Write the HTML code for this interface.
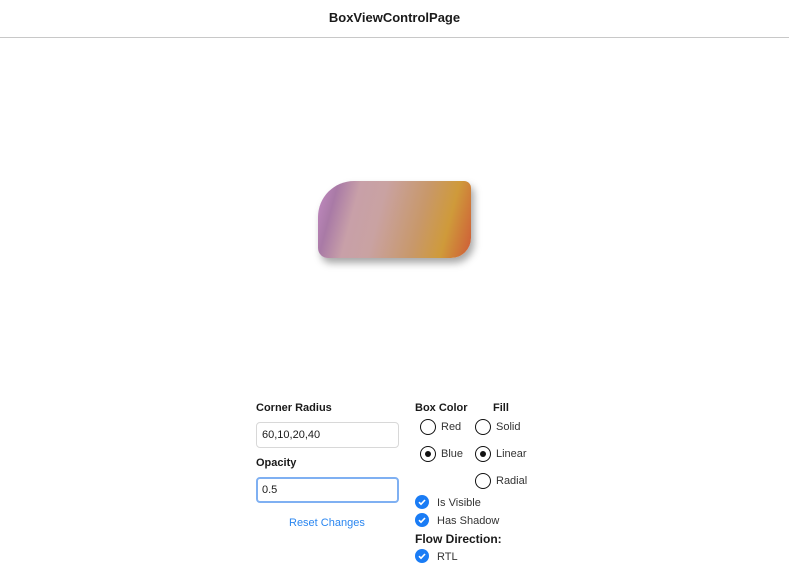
<!DOCTYPE html>
<html><head><style>
body{margin:0;width:789px;height:563px;background:#fff;font-family:"Liberation Sans",Arial,sans-serif;position:relative;overflow:hidden;color:#1a1a1a}
.hdr{position:absolute;left:0;top:0;width:789px;height:37px;border-bottom:1px solid #c8c8c8;text-align:center;line-height:36px;font-size:13px;font-weight:bold}
.box{position:absolute;left:318px;top:181px;width:153px;height:77px;border-radius:36px 7px 20px 10px;
background:linear-gradient(105deg,#c48cc4 0%,#a97aa6 12%,#c8a0a8 25%,#c9a2a2 40%,#c8986a 65%,#cf9a3a 82%,#cf5a38 100%);
box-shadow:3px 5px 8px rgba(0,0,0,0.35)}
.lbl{position:absolute;font-size:11px;font-weight:bold}
.inp{position:absolute;left:256px;width:143px;height:26px;border:1px solid #d8d8d8;border-radius:4px;font-size:11px;line-height:24px;padding-left:5px;box-sizing:border-box}
.t{position:absolute;font-size:11px;color:#333}
.r{position:absolute;width:16px;height:16px;border:1.5px solid #111;border-radius:50%;box-sizing:border-box}
.r.on::after{content:"";position:absolute;left:3.5px;top:3.5px;width:6px;height:6px;border-radius:50%;background:#111}
.c{position:absolute;left:415px;width:14px;height:14px;border-radius:50%;background:#1a7cf5}
.c svg{position:absolute;left:0;top:0}
</style></head><body>
<div class="hdr">BoxViewControlPage</div>
<div class="box"></div>
<div class="lbl" style="left:256px;top:402px">Corner Radius</div>
<div class="inp" style="top:422px;line-height:25px">60,10,20,40</div>
<div class="lbl" style="left:256px;top:457px">Opacity</div>
<div class="inp" style="top:477px;border:2px solid #7fb0f2;line-height:23px;padding-left:4px">0.5</div>
<div class="t" style="left:289px;top:517px;color:#2a86f0">Reset Changes</div>
<div class="lbl" style="left:415px;top:402px">Box Color</div>
<div class="lbl" style="left:493px;top:402px">Fill</div>
<div class="r" style="left:420px;top:419px"></div><div class="t" style="left:441px;top:421px">Red</div>
<div class="r on" style="left:420px;top:446px"></div><div class="t" style="left:441px;top:448px">Blue</div>
<div class="r" style="left:475px;top:419px"></div><div class="t" style="left:496px;top:421px">Solid</div>
<div class="r on" style="left:475px;top:446px"></div><div class="t" style="left:496px;top:448px">Linear</div>
<div class="r" style="left:475px;top:473px"></div><div class="t" style="left:496px;top:475px">Radial</div>
<div class="c" style="top:495px"><svg width="14" height="14"><path d="M4 7.2l2 2 4-4.2" stroke="#fff" stroke-width="1.6" fill="none"/></svg></div><div class="t" style="left:437px;top:497px">Is Visible</div>
<div class="c" style="top:513px"><svg width="14" height="14"><path d="M4 7.2l2 2 4-4.2" stroke="#fff" stroke-width="1.6" fill="none"/></svg></div><div class="t" style="left:437px;top:515px">Has Shadow</div>
<div class="lbl" style="left:415px;top:532px;font-size:12px">Flow Direction:</div>
<div class="c" style="top:549px"><svg width="14" height="14"><path d="M4 7.2l2 2 4-4.2" stroke="#fff" stroke-width="1.6" fill="none"/></svg></div><div class="t" style="left:437px;top:551px">RTL</div>
</body></html>
